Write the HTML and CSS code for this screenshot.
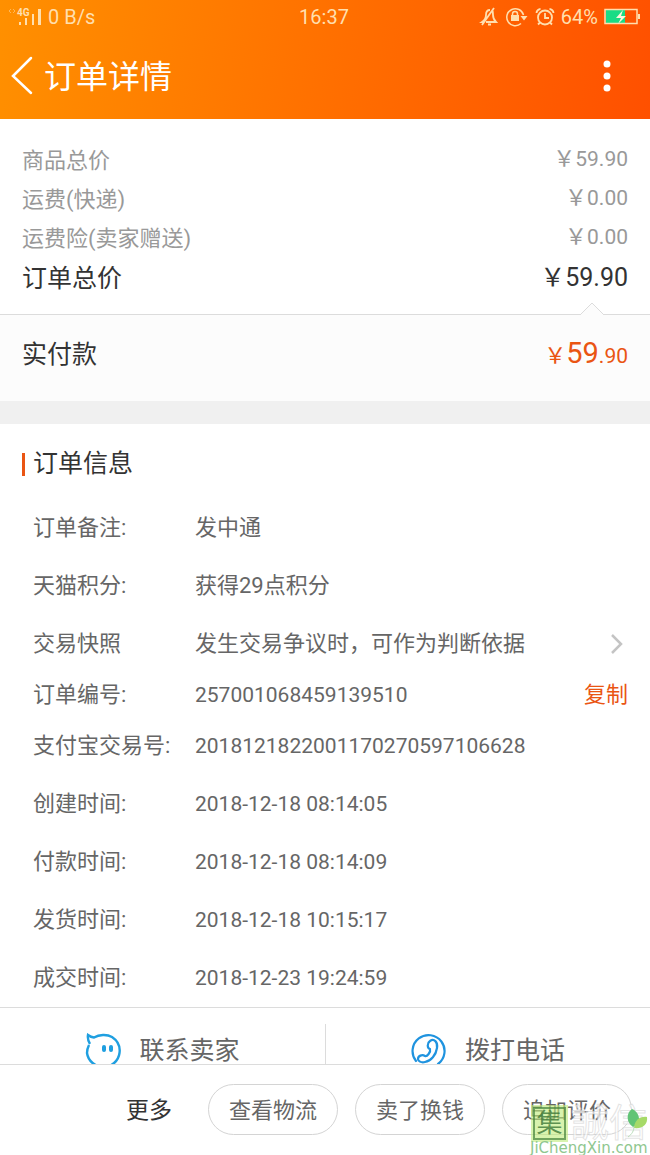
FILE: index.html
```html
<!DOCTYPE html>
<html lang="zh-CN">
<head>
<meta charset="utf-8">
<meta name="viewport" content="width=device-width, initial-scale=1">
<title>订单详情</title>
<link rel="stylesheet" href="styles.css">
</head>
<body>
<div class="app">
  <header class="header">
    <div class="status">
      <div class="status-side">
        <svg class="signal" width="36" height="20" viewBox="0 0 36 20" aria-hidden="true">
          <path d="M3 2L1 4l2 2M5 2l2 2-2 2" fill="none" stroke="currentColor" opacity=".5"/>
          <path d="M11 15h2v3h-2zM17 11h2v7h-2zM24 7h2v11h-2zM30 2h3v16h-3z" fill="currentColor"/>
          <text class="signal-label" x="9" y="9">4G</text>
        </svg>
        <span>0 B/s</span>
      </div>
      <time>16:37</time>
      <div class="status-side status-end">
        <svg width="20" height="20" viewBox="0 0 20 20" fill="none" stroke="currentColor" stroke-width="1.800" aria-hidden="true">
          <path d="M7 15h10c-2-2-3-4-3-7 0-2 0-4-1-5M11 3C8 3 7 5 7 8c0 3-1 5-4 7h1M15 1L3 18M9 17.500h3"/>
        </svg>
        <svg width="24" height="20" viewBox="0 0 24 20" fill="none" stroke="currentColor" stroke-width="1.500" aria-hidden="true">
          <path d="M18.500 8A8.500 8.500 0 1 0 16 16.500"/>
          <path d="M7.500 9V7a2.500 2.500 0 0 1 5 0v2"/>
          <path d="M6 8h8v6H6zM15.500 9h7L19 13.500z" fill="currentColor" stroke="none"/>
        </svg>
        <svg width="20" height="20" viewBox="0 0 20 20" fill="none" stroke="currentColor" stroke-width="1.800" aria-hidden="true">
          <circle cx="10" cy="10.500" r="7"/><path d="M10 6v5h4M1.500 6c0-2 2-4 4-4M18.500 6c0-2-2-4-4-4M5 15.500l-2 2M15 15.500l2 2"/>
        </svg>
        <span>64%</span>
        <svg width="36" height="18" viewBox="0 0 36 18" aria-hidden="true">
          <path d="M2 2h19v13H2z" fill="#19dc85"/>
          <path d="M1 1.500h32v14H1z" fill="none" stroke="currentColor" stroke-width="1.500"/>
          <path d="M34 6h2v5h-2z" fill="currentColor"/>
          <path d="M19 2l-7 8h5l-3 6 8-8h-5z" fill="#fff6dc"/>
        </svg>
      </div>
    </div>
    <div class="title-bar">
      <button class="icon-button" type="button" aria-label="返回">
        <svg width="22" height="40" viewBox="0 0 22 40" fill="none" stroke="currentColor" stroke-width="2.500" stroke-linecap="round"><path d="M20 2L2 20l18 17"/></svg>
      </button>
      <h1 class="title">订单详情</h1>
      <button class="icon-button" type="button" aria-label="更多选项">
        <svg width="10" height="34" viewBox="0 0 10 34" fill="currentColor"><circle cx="5" cy="5" r="3.500"/><circle cx="5" cy="17" r="3.500"/><circle cx="5" cy="29" r="3.500"/></svg>
      </button>
    </div>
  </header>

  <main class="content">
    <section class="summary">
      <div class="price-row"><span>商品总价</span><span class="price"><span class="yen">￥</span>59.90</span></div>
      <div class="price-row"><span>运费(快递)</span><span class="price"><span class="yen">￥</span>0.00</span></div>
      <div class="price-row"><span>运费险(卖家赠送)</span><span class="price"><span class="yen">￥</span>0.00</span></div>
      <div class="price-row total"><span>订单总价</span><span class="price total-price"><span class="total-yen">￥</span>59.90</span></div>
    </section>
    <section class="paid">
      <svg class="notch" width="26" height="14" viewBox="0 0 26 14" aria-hidden="true"><path d="M1 13L13 1l12 12v1H1z" fill="#fcfcfc"/><path d="M1 13L13 1l12 12" fill="none" stroke="#dcdcdc"/></svg>
      <span>实付款</span>
      <span class="price paid-price"><span class="yen">￥</span><strong class="amount">59</strong>.90</span>
    </section>

    <section class="info">
      <h2 class="info-title">订单信息</h2>
      <dl class="details">
        <div class="detail"><dt>订单备注:</dt><dd>发中通</dd></div>
        <div class="detail"><dt>天猫积分:</dt><dd>获得29点积分</dd></div>
        <div class="detail"><dt>交易快照</dt><dd>发生交易争议时，可作为判断依据</dd>
          <dd class="detail-action"><button class="icon-button chevron" type="button" aria-label="查看交易快照"><svg width="14" height="22" viewBox="0 0 14 22" fill="none" stroke="currentColor" stroke-width="2.500"><path d="M2 2l9 9-9 9"/></svg></button></dd></div>
        <div class="detail compact"><dt>订单编号:</dt><dd class="number">257001068459139510</dd>
          <dd class="detail-action"><button class="copy" type="button">复制</button></dd></div>
        <div class="detail"><dt>支付宝交易号:</dt><dd class="number">2018121822001170270597106628</dd></div>
        <div class="detail"><dt>创建时间:</dt><dd class="number">2018-12-18 08:14:05</dd></div>
        <div class="detail"><dt>付款时间:</dt><dd class="number">2018-12-18 08:14:09</dd></div>
        <div class="detail"><dt>发货时间:</dt><dd class="number">2018-12-18 10:15:17</dd></div>
        <div class="detail"><dt>成交时间:</dt><dd class="number">2018-12-23 19:24:59</dd></div>
      </dl>
    </section>

    <nav class="contacts">
      <button class="contact" type="button">
        <svg width="36" height="36" viewBox="0 0 36 36" fill="none" stroke="#1f9fe0" stroke-width="2.400" aria-hidden="true">
          <path d="M5 11C3 8 2.500 5 3 2c2 1.500 3 2.200 6 2.500C14 1.500 22 1 27 4c6 4 8.500 9 7.500 16-1 8-8 14-16 14S3 28 2 20c0-3 .5-5 2-8"/>
          <path d="M19 14v3M26 14v3" stroke-width="4" stroke-linecap="round"/>
        </svg>
        <span>联系卖家</span>
      </button>
      <button class="contact" type="button">
        <svg width="36" height="36" viewBox="0 0 36 36" fill="none" stroke="#1f93df" stroke-width="2.200" stroke-linecap="round" aria-hidden="true">
          <path d="M5 28A16 16 0 1 1 27 31"/>
          <path d="M19 8c4-3 8 1 7 7-1 7-6 13-12 14-4 1-7-1-7-3 0-3 4-5 7-3 2 1 6-4 5-7-3-1-3-6 0-8z"/>
        </svg>
        <span>拨打电话</span>
      </button>
    </nav>
  </main>

  <footer class="actions">
    <button class="more" type="button">更多</button>
    <button class="pill" type="button">查看物流</button>
    <button class="pill" type="button">卖了换钱</button>
    <button class="pill" type="button">追加评价</button>
    <div class="watermark">
      <div class="brand">
        <span class="brand-box">集</span>
        <span class="brand-ghost">誠信</span>
        <svg class="leaf" width="22" height="30" viewBox="0 0 22 30" aria-hidden="true">
          <path d="M7 19C0 14 0 5 6 1c7 3 9 10 5 18z" fill="#62c476"/>
          <path d="M8 19c1-7 6-11 13-10 1 7-4 12-13 11z" fill="#a6da68"/>
          <path d="M8 18c0 5-2 8-6 11" fill="none" stroke="#b9dcb9"/>
        </svg>
      </div>
      <div class="site">JiChengXin.com</div>
    </div>
  </footer>
</div>
</body>
</html>
```
FILE: styles.css
```css
* { box-sizing: border-box; }
body {
  margin: 0;
  background: #fff;
  color: #666;
  font-family: Roboto, "Noto Sans CJK SC", sans-serif;
  font-size: 22px;
}
h1, h2, dl, dd { margin: 0; font-weight: 400; }
button { margin: 0; padding: 0; border: 0; background: none; color: inherit; font: inherit; }
svg { display: block; flex: none; }

.app { display: flex; flex-direction: column; height: 100vh; }

.header { flex: none; background: linear-gradient(100deg, #ff9000, #ff5000); color: #fff; }
.status {
  display: grid;
  grid-template-columns: 1fr auto 1fr;
  align-items: center;
  height: 33px;
  padding: 0 10px 0 8px;
  color: #ffdfae;
  font-size: 20px;
}
.status-side { display: flex; align-items: center; gap: 4px; }
.status-end { justify-content: flex-end; gap: 6px; }
.signal-label { fill: currentColor; font-size: 10px; font-weight: 700; }
.title-bar { display: flex; align-items: center; gap: 11px; height: 86px; padding: 0 38px 0 11px; }
.title { flex: 1; padding-top: 2px; font-size: 32px; line-height: 40px; }
.icon-button { display: flex; }

.content { flex: 1; min-height: 0; overflow-y: auto; scrollbar-width: none; }

.summary { padding: 23px 22px 14px; }
.price-row { display: flex; align-items: flex-start; justify-content: space-between; height: 39px; color: #999; line-height: 38px; }
.price { display: flex; align-items: baseline; font-size: 21px; line-height: 28px; }
.yen, .total-yen { font-family: "Noto Sans CJK SC", sans-serif; }
.yen { font-size: 22px; }
.total { height: 41px; color: #333; font-size: 25px; line-height: 40px; }
.total-price { font-size: 25px; line-height: 32px; }

.paid {
  position: relative;
  display: flex;
  align-items: baseline;
  justify-content: space-between;
  height: 87px;
  padding: 21px 22px 0;
  border-top: 1px solid #dcdcdc;
  background: #fcfcfc;
  color: #333;
  font-size: 25px;
  line-height: 38px;
}
.notch { position: absolute; top: -13px; right: 45px; }
.paid-price { color: #ea5513; }
.amount { font-size: 29px; font-weight: 400; }

.info { border-top: 23px solid #f0f0f0; border-bottom: 1px solid #dcdcdc; }
.info-title {
  display: flex;
  align-items: center;
  gap: 8px;
  padding: 22px 22px 17px;
  color: #333;
  font-size: 25px;
  line-height: 36px;
}
.info-title::before { content: ""; width: 3px; height: 23px; background: #ea5513; }
.detail {
  display: grid;
  grid-template-columns: 162px 1fr auto;
  align-items: center;
  height: 58px;
  padding: 0 22px 0 33px;
  line-height: 30px;
  white-space: nowrap;
}
.compact { height: 44px; }
.number { font-size: 21px; }
.chevron { padding-right: 4px; color: #c4c4c4; }
.copy { display: block; color: #ea5513; line-height: 30px; }

.contacts { display: grid; grid-template-columns: 1fr 1fr; padding: 16px 0; }
.contact { display: flex; align-items: center; justify-content: center; gap: 18px; height: 54px; font-size: 25px; line-height: 36px; }
.contact + .contact { border-left: 1px solid #dcdcdc; }

.actions {
  position: relative;
  flex: none;
  display: flex;
  align-items: center;
  justify-content: flex-end;
  gap: 17px;
  padding: 19px 18px 20px;
  border-top: 1px solid #dcdcdc;
  background: #fff;
}
.more { margin-right: 19px; padding-top: 2px; color: #333; font-size: 23px; line-height: 32px; }
.pill { height: 51px; padding: 2px 20px 0; border: 1px solid #d4d4d4; border-radius: 26px; line-height: 32px; }

.watermark { position: absolute; right: 0; bottom: 0; width: 120px; pointer-events: none; }
.brand { display: flex; align-items: center; gap: 5px; padding-left: 3px; }
.brand-box {
  width: 33px;
  height: 33px;
  border: 2px solid rgba(70, 130, 60, .7);
  outline: 2px solid rgba(190, 235, 120, .6);
  background: rgba(190, 235, 120, .6);
  color: rgba(60, 120, 55, .8);
  font-size: 26px;
  line-height: 28px;
  text-align: center;
}
.brand-ghost { color: rgba(255, 255, 255, .7); font-size: 38px; line-height: 36px; -webkit-text-stroke: 1px rgba(200, 200, 200, .5); }
.leaf { position: absolute; top: 3px; right: 2px; }
.site { color: #8fc78f; font-family: "DejaVu Sans", sans-serif; font-size: 15px; line-height: 14px; }
```
